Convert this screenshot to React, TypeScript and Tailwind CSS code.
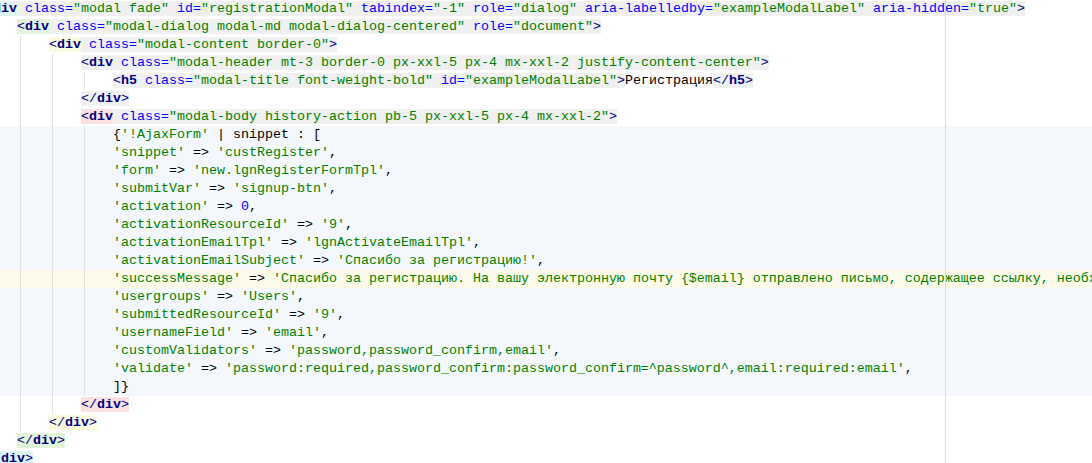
import React from "react";

type Seg = { t: string; c?: string; bg?: string };
type Line = { bg?: string; segs: Seg[] };

const B = "text-[#000080]";
const T = "text-[#000080] font-bold";
const A = "text-[#0000ff]";
const V = "text-[#008000]";
const K = "text-[#000000]";
const N = "text-[#0000ff]";

const GRAY = "bg-[#f0f0f0]";
const CYAN = "bg-[#dff3f1]";
const GREEN = "bg-[#e4f4da]";
const YELLOW = "bg-[#fafade]";
const PINK = "bg-[#fbe1e1]";

const ROW_BLUE = "bg-[#f4f8fd]";
const ROW_CARET = "bg-[#fcfae8]";

function sp(n: number): Seg {
  return { t: " ".repeat(n) };
}

function openTag(name: string, attrs: [string, string][], tree?: string): Seg[] {
  const tb = tree ?? GRAY;
  const out: Seg[] = [
    { t: "<", c: B, bg: tb },
    { t: name, c: T, bg: tb },
  ];
  attrs.forEach(([k, v]) => {
    out.push({ t: " ", bg: GRAY });
    out.push({ t: k, c: A, bg: GRAY });
    out.push({ t: "=", c: A, bg: GRAY });
    out.push({ t: `"${v}"`, c: V, bg: GRAY });
  });
  out.push({ t: ">", c: B, bg: GRAY });
  return out;
}

function closeTag(name: string, bg: string): Seg[] {
  return [
    { t: "</", c: B, bg },
    { t: name, c: T, bg },
    { t: ">", c: B, bg },
  ];
}

function kv(key: string, val: string, num = false): Seg[] {
  return [
    sp(16),
    { t: `'${key}'`, c: V },
    { t: " => ", c: K },
    num ? { t: val, c: N } : { t: `'${val}'`, c: V },
    { t: ",", c: K },
  ];
}

const lines: Line[] = [
  {
    segs: openTag(
      "div",
      [
        ["class", "modal fade"],
        ["id", "registrationModal"],
        ["tabindex", "-1"],
        ["role", "dialog"],
        ["aria-labelledby", "exampleModalLabel"],
        ["aria-hidden", "true"],
      ],
      CYAN
    ),
  },
  {
    segs: [
      sp(4),
      ...openTag(
        "div",
        [
          ["class", "modal-dialog modal-md modal-dialog-centered"],
          ["role", "document"],
        ],
        GREEN
      ),
    ],
  },
  { segs: [sp(8), ...openTag("div", [["class", "modal-content border-0"]], YELLOW)] },
  {
    segs: [
      sp(12),
      ...openTag("div", [
        ["class", "modal-header mt-3 border-0 px-xxl-5 px-4 mx-xxl-2 justify-content-center"],
      ]),
    ],
  },
  {
    segs: [
      sp(16),
      ...openTag("h5", [
        ["class", "modal-title font-weight-bold"],
        ["id", "exampleModalLabel"],
      ]),
      { t: "Регистрация", c: K },
      ...closeTag("h5", GRAY),
    ],
  },
  { segs: [sp(12), ...closeTag("div", GRAY)] },
  {
    segs: [
      sp(12),
      ...openTag("div", [["class", "modal-body history-action pb-5 px-xxl-5 px-4 mx-xxl-2"]], PINK),
    ],
  },
  {
    bg: ROW_BLUE,
    segs: [
      sp(16),
      { t: "{", c: K },
      { t: "'!AjaxForm'", c: V },
      { t: " | snippet : [", c: K },
    ],
  },
  { bg: ROW_BLUE, segs: kv("snippet", "custRegister") },
  { bg: ROW_BLUE, segs: kv("form", "new.lgnRegisterFormTpl") },
  { bg: ROW_BLUE, segs: kv("submitVar", "signup-btn") },
  { bg: ROW_BLUE, segs: kv("activation", "0", true) },
  { bg: ROW_BLUE, segs: kv("activationResourceId", "9") },
  { bg: ROW_BLUE, segs: kv("activationEmailTpl", "lgnActivateEmailTpl") },
  { bg: ROW_BLUE, segs: kv("activationEmailSubject", "Спасибо за регистрацию!") },
  {
    bg: ROW_CARET,
    segs: kv(
      "successMessage",
      "Спасибо за регистрацию. На вашу электронную почту {$email} отправлено письмо, содержащее ссылку, необходимую для активации аккаунта."
    ),
  },
  { bg: ROW_BLUE, segs: kv("usergroups", "Users") },
  { bg: ROW_BLUE, segs: kv("submittedResourceId", "9") },
  { bg: ROW_BLUE, segs: kv("usernameField", "email") },
  { bg: ROW_BLUE, segs: kv("customValidators", "password,password_confirm,email") },
  {
    bg: ROW_BLUE,
    segs: kv(
      "validate",
      "password:required,password_confirm:password_confirm=^password^,email:required:email"
    ),
  },
  { bg: ROW_BLUE, segs: [sp(16), { t: "]}", c: K }] },
  { segs: [sp(12), ...closeTag("div", PINK)] },
  { segs: [sp(8), ...closeTag("div", YELLOW)] },
  { segs: [sp(4), ...closeTag("div", GREEN)] },
  { segs: closeTag("div", CYAN) },
];

function Guide({ left, top, height }: { left: number; top: number; height: number }) {
  return (
    <div
      className="absolute w-px bg-[#e2e2e2]"
      style={{ left, top, height }}
    />
  );
}

export default function App() {
  return (
    <div className="w-[1092px] h-[463px] overflow-hidden bg-white">
      <div className="relative ml-[-15px] w-[1600px] font-['Liberation_Mono','Courier_New',monospace] text-[13.333px] leading-[18px]">
        {lines.map((ln, i) => (
          <div key={i} className={`h-[18px] whitespace-pre ${ln.bg ?? ""}`}>
            {ln.segs.map((s, j) => (
              <span key={j} className={`${s.c ?? ""} ${s.bg ?? ""}`}>
                {s.t}
              </span>
            ))}
          </div>
        ))}
        <Guide left={35} top={36} height={396} />
        <Guide left={67} top={54} height={360} />
        <Guide left={99} top={72} height={18} />
        <Guide left={99} top={126} height={270} />
        <div className="absolute top-0 left-[960px] w-px h-[470px] bg-[#dcdcdc]" />
      </div>
    </div>
  );
}
